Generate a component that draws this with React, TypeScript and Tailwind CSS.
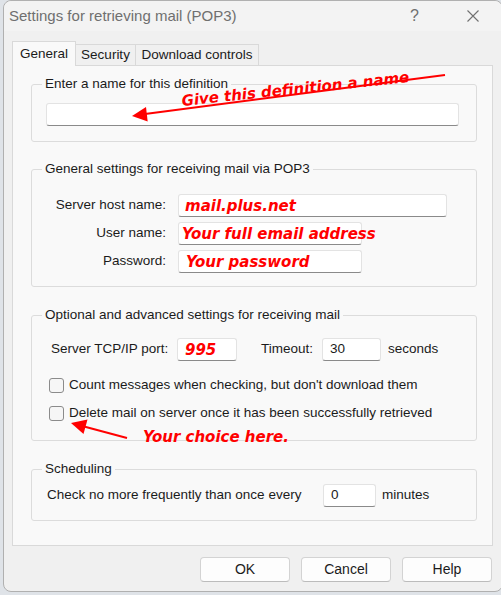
import React from "react"

const field = "h-[23px] bg-white border border-[#e3e3e3] border-b-[#8a8a8a] rounded-[3px] flex items-center whitespace-nowrap"
const red = "font-['DejaVu_Sans',Verdana,sans-serif] font-bold italic text-[15px] leading-[18px] text-[#ff0000]"

function Group({ title, className, inner, children }: { title: string; className?: string; inner?: string; children: React.ReactNode }) {
  return (
    <fieldset className={`border border-[#dcdcdc] rounded-[3px] ${className ?? ""}`}>
      <legend className="ml-[10px] px-[3px] leading-[16px]">{title}</legend>
      <div className={inner}>{children}</div>
    </fieldset>
  )
}

function Check({ label, className }: { label: string; className?: string }) {
  return (
    <div className={`flex items-center ${className ?? ""}`}>
      <span className="w-[15px] h-[15px] rounded-[3px] border border-[#8b8b8b] bg-[#f6f6f6]" />
      <span className="ml-[5px] leading-[16px]">{label}</span>
    </div>
  )
}

function Button({ label }: { label: string }) {
  return (
    <button className="w-[90px] h-[25px] bg-[#fdfdfd] border border-[#d3d3d3] border-b-[#bcbcbc] rounded-[4px] text-[14px] text-[#1b1b1b]">
      {label}
    </button>
  )
}

export default function App() {
  return (
    <div className="relative w-[501px] h-[595px] overflow-hidden bg-[#dfe3e8] pl-[3px] font-['Liberation_Sans',Arial,sans-serif] text-[13.5px] text-[#1b1b1b]">
      {/* dialog window */}
      <div className="w-[500px] h-[592px] bg-[#f0f0f0] border border-[#b0b0b0] rounded-[8px] flex flex-col">
        {/* title bar */}
        <div className="h-[30px] flex items-center pl-[5px] bg-[#f3f3f3] rounded-t-[8px] text-[#6f6f6f]">
          <span className="text-[15px]">Settings for retrieving mail (POP3)</span>
          <span className="ml-auto text-[16px] mr-[47px]">?</span>
          <svg width="14" height="14" viewBox="0 0 14 14" className="mr-[22px]">
            <path d="M1.5 1.5 L12.5 12.5 M12.5 1.5 L1.5 12.5" stroke="#707070" strokeWidth="1.1" fill="none" />
          </svg>
        </div>

        {/* tabs */}
        <div className="pl-[8px] mt-[10px] flex items-end">
          <div className="relative z-10 -mb-px h-[25px] w-[64px] bg-[#f9f9f9] border border-b-0 border-[#d9d9d9] flex items-center justify-center">
            General
          </div>
          <div className="h-[21px] w-[60px] border border-b-0 border-l-0 border-[#d9d9d9] flex items-center justify-center">
            Security
          </div>
          <div className="h-[21px] w-[123px] border border-b-0 border-l-0 border-[#d9d9d9] flex items-center justify-center">
            Download controls
          </div>
        </div>

        {/* tab page */}
        <div className="ml-[8px] w-[481px] h-[481px] bg-[#f9f9f9] border border-[#d9d9d9] pl-[18px] pr-[15px] pt-[10px] flex flex-col">
          <Group title="Enter a name for this definition" inner="px-[14px] pt-[11px] pb-[15px]">
            <div className={`${field} w-[413px]`} />
          </Group>

          <Group title="General settings for receiving mail via POP3" className="mt-[19px]" inner="pt-[17px] pb-[13px]">
            <div className="grid grid-cols-[134px_auto] gap-x-[12px] gap-y-[5px] items-center">
              <span className="text-right">Server host name:</span>
              <div className={`${field} w-[269px] pl-[6px]`}>
                <span className={red}>mail.plus.net</span>
              </div>
              <span className="text-right">User name:</span>
              <div className={`${field} w-[184px] pl-[3px]`}>
                <span className={red}>Your full email address</span>
              </div>
              <span className="text-right">Password:</span>
              <div className={`${field} w-[184px] pl-[7px]`}>
                <span className={red}>Your password</span>
              </div>
            </div>
          </Group>

          <Group title="Optional and advanced settings for receiving mail" className="mt-[20px]" inner="pl-[17px] pt-[15px] pb-[19px]">
            <div className="flex items-center">
              <span className="w-[128px] pl-[2px]">Server TCP/IP port:</span>
              <div className={`${field} w-[60px] pl-[7px]`}>
                <span className={red}>995</span>
              </div>
              <span className="ml-[24px] w-[61px]">Timeout:</span>
              <div className={`${field} w-[59px] pl-[7px]`}>30</div>
              <span className="ml-[7px]">seconds</span>
            </div>
            <Check label="Count messages when checking, but don't download them" className="mt-[16px]" />
            <Check label="Delete mail on server once it has been successfully retrieved" className="mt-[12px]" />
          </Group>

          <Group title="Scheduling" className="mt-[20px]" inner="pl-[15px] pt-[7px] pb-[13px]">
            <div className="flex items-center">
              <span className="w-[276px]">Check no more frequently than once every</span>
              <div className={`${field} w-[53px] pl-[7px]`}>0</div>
              <span className="ml-[6px]">minutes</span>
            </div>
          </Group>
        </div>

        {/* buttons */}
        <div className="mt-[11px] pr-[10px] flex justify-end gap-[11px]">
          <Button label="OK" />
          <Button label="Cancel" />
          <Button label="Help" />
        </div>
      </div>

      {/* red annotations */}
      <svg className="absolute left-0 top-0 pointer-events-none" width="501" height="595" viewBox="0 0 501 595">
        <line x1="445" y1="75" x2="145" y2="114" stroke="#ff0000" strokeWidth="2" />
        <polygon points="132,116 147.7,121.5 146,107" fill="#ff0000" />
        <line x1="127" y1="438" x2="84" y2="426.5" stroke="#ff0000" strokeWidth="2" />
        <polygon points="71,423 87.5,419.5 83.5,434" fill="#ff0000" />
      </svg>
      <div className={`absolute left-[181px] top-[80px] -rotate-6 whitespace-nowrap ${red}`}>Give this definition a name</div>
      <div className={`absolute left-[143px] top-[428px] whitespace-nowrap ${red}`}>Your choice here.</div>
    </div>
  )
}
